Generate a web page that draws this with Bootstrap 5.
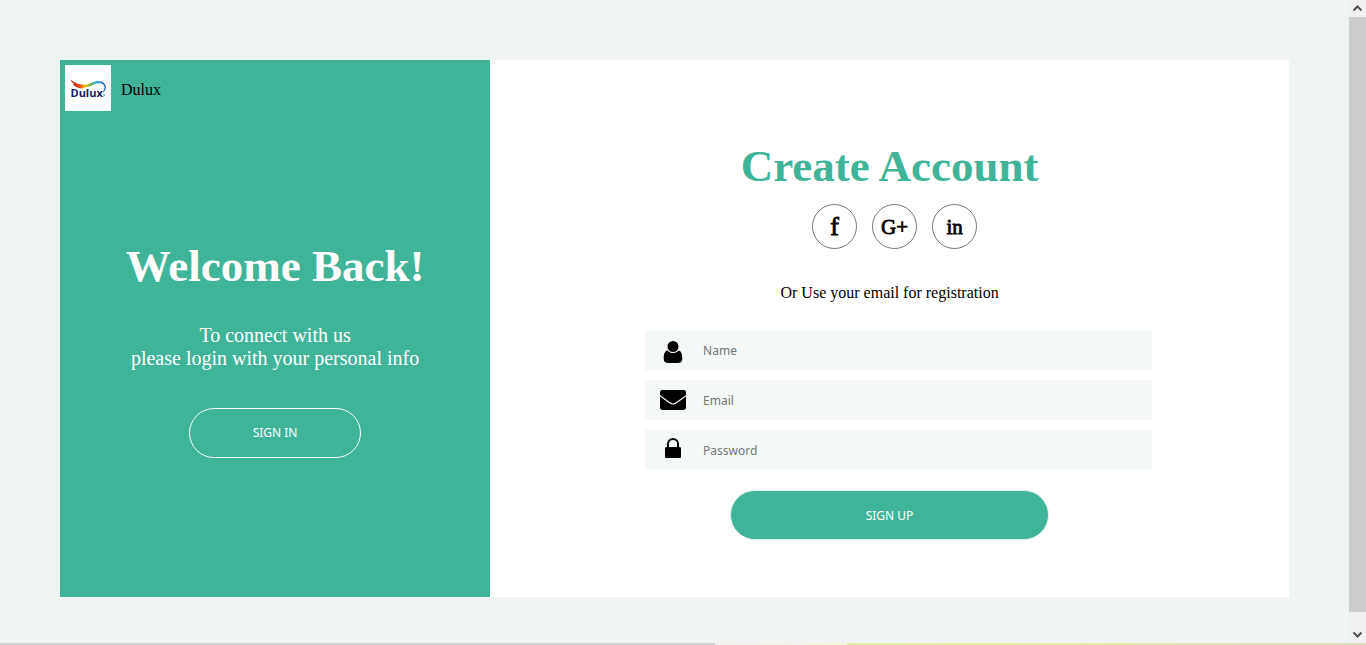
<!DOCTYPE html>
<html lang="en">
<head>
<meta charset="utf-8">
<meta name="viewport" content="width=device-width, initial-scale=1">
<title>Dulux - Create Account</title>
<link href="https://cdn.jsdelivr.net/npm/bootstrap@5.3.0/dist/css/bootstrap.min.css" rel="stylesheet">
<style>
  :root { --brand: #3fb498; --page: #f0f5f4; --field: #f4f9f8; }
  body { background: var(--page); color: #000; font-family: "Liberation Serif", "Times New Roman", serif; font-size: 16px; line-height: 18px; }
  .page-area { padding: 60px 60px 46px; }
  .welcome-pane { width: 35%; background: var(--brand); }
  .brand-link { padding: 5px; gap: 10px; }
  .brand-logo { width: 46px; height: 46px; }
  .big-title { font-size: 45px; line-height: 52px; font-weight: 700; }
  .welcome-body { padding-bottom: 16px; }
  .welcome-text { font-size: 20px; line-height: 23px; margin: 32px 0 38px; }
  .pill { width: 40%; height: 50px; border: 1px solid #fff; border-radius: 25px; background: var(--brand); color: #fff; font: 12px "Noto Sans", Tahoma, sans-serif; }
  .create-title { color: var(--brand); padding-top: 80px; }
  .social-row { gap: 15px; padding-left: 10px; margin-top: 12px; }
  .social-link { width: 45px; height: 45px; border: 1px solid #777; color: #000; font-size: 21px; font-weight: 400; -webkit-text-stroke: 0.8px #000; }
  .social-link.bolder { font-size: 26px; }
  .email-note { margin: 35px 0 28px; }
  .signup-form { gap: 10px; }
  .field-row { width: 507px; max-width: 90%; height: 40px; margin-left: 18px; background: var(--field); }
  .field-icon { width: 56px; height: 40px; }
  .field-row input { font: 12px "Noto Sans", Tahoma, sans-serif; padding: 0 2px; outline: 0; }
  .field-row input::placeholder { color: #757575; opacity: 1; }
  .signup-form .pill { margin-top: 10px; border-color: #e3f3ef; }
  .scroll-rail { width: 17px; background: #f0f0f0; }
  .scroll-rail svg { width: 17px; height: 17px; }
  .scroll-thumb { background: #cdcdcd; margin-bottom: 14px; }
  .bottom-strip { height: 2px; background: linear-gradient(90deg, #d0d3d1 0 715px, #f0f1ef 715px, #f2f6d8 847px, #e0eaa8 847px, #ecec9c 980px, #dcdcc0 100%); }
</style>
</head>
<body>
<div class="d-flex flex-column min-vh-100">
  <div class="d-flex flex-grow-1">
    <main class="page-area d-flex flex-grow-1">
      <section class="welcome-pane d-flex flex-column">
        <a href="#" class="brand-link d-flex align-items-center text-reset text-decoration-none">
          <svg class="brand-logo" viewBox="0 0 46 46" role="img" aria-label="Dulux logo">
            <defs>
              <linearGradient id="ribbon" x1="0" x2="1" y1="0" y2="0">
                <stop offset="0" stop-color="#c4161c"/><stop offset=".25" stop-color="#e8481c"/>
                <stop offset=".42" stop-color="#f8c51c"/><stop offset=".57" stop-color="#69b544"/>
                <stop offset=".72" stop-color="#35b4e5"/><stop offset="1" stop-color="#244a9b"/>
              </linearGradient>
            </defs>
            <rect width="46" height="46" fill="#fff"/>
            <path fill="url(#ribbon)" d="M6 15c3 2.500 6 3.500 9.500 4.300 4 .8 7.500.2 10.500-1.300 4.500-2.400 8.500-2.600 11.500-.9 2.800 1.600 4 4.300 3.100 6.900-.6 1.700-2 2.500-2.200 4-.6-1.600.2-3 .9-4.300.9-2-.2-4.200-2.800-5.100-3.500-1-6.500.2-9.500 1.800-3.500 1.800-6.500 1.200-9.500 3-3.500-.1-7-.7-9.500-4.200l1-.5C7.500 17.500 6 17 6 15z"/>
            <text x="5.500" y="32" font-family="Open Sans, sans-serif" font-size="11" font-weight="700" fill="#14205f">Dulux</text>
            <path d="M38.500 29.500l1 .2-.7 1.800" fill="none" stroke="#244a9b" stroke-width=".8"/>
          </svg>
          <span class="pt-1">Dulux</span>
        </a>
        <div class="welcome-body d-flex flex-column align-items-center justify-content-center flex-grow-1 text-white text-center">
          <h1 class="big-title m-0">Welcome Back!</h1>
          <p class="welcome-text">To connect with us<br>please login with your personal info</p>
          <button type="button" class="pill">SIGN IN</button>
        </div>
      </section>
      <section class="bg-white flex-grow-1 d-flex flex-column align-items-center">
        <h2 class="big-title create-title mb-0">Create Account</h2>
        <div class="social-row d-flex">
          <a href="#" aria-label="Facebook" class="social-link bolder rounded-circle d-flex align-items-center justify-content-center text-decoration-none">f</a>
          <a href="#" aria-label="Google Plus" class="social-link rounded-circle d-flex align-items-center justify-content-center text-decoration-none">G+</a>
          <a href="#" aria-label="LinkedIn" class="social-link rounded-circle d-flex align-items-center justify-content-center text-decoration-none">in</a>
        </div>
        <p class="email-note">Or Use your email for registration</p>
        <form class="signup-form w-100 d-flex flex-column align-items-center">
          <div class="field-row d-flex">
            <label for="name" class="field-icon" aria-label="Name">
              <svg width="56" height="40" viewBox="0 0 56 40"><path d="M22.500 20.500c-2.700.5-3.800 3.400-3.800 8 0 3 1.600 4.500 4.300 4.500h10c2.700 0 4.300-1.500 4.300-4.500 0-4.600-1.100-7.500-3.800-8-1.300 1.500-3.300 2.500-5.500 2.500s-4.200-1-5.500-2.500z"/><circle cx="28" cy="16.500" r="5.500" stroke="#f4f9f8" stroke-width="1.800" paint-order="stroke"/></svg>
            </label>
            <input id="name" type="text" class="border-0 bg-transparent flex-grow-1" placeholder="Name">
          </div>
          <div class="field-row d-flex">
            <label for="email" class="field-icon" aria-label="Email">
              <svg width="56" height="40" viewBox="0 0 56 40"><rect x="15" y="10" width="26" height="20" rx="2.400"/><path d="M14.500 15c1 1.300 2.300 2.200 3.600 3.100l5.900 4.100c1.300.9 2.600 1.800 4 1.800s2.700-.9 4-1.800l5.900-4.100c1.300-.9 2.600-1.800 3.600-3.100" fill="none" stroke="#f4f9f8" stroke-width="1.200"/></svg>
            </label>
            <input id="email" type="email" class="border-0 bg-transparent flex-grow-1" placeholder="Email">
          </div>
          <div class="field-row d-flex">
            <label for="password" class="field-icon" aria-label="Password">
              <svg width="56" height="40" viewBox="0 0 56 40"><path fill-rule="evenodd" d="M21.500 17h.5v-3a6 6 0 0 1 12 0v3h.5c1 0 1.500.6 1.500 1.500v8c0 1-.5 1.500-1.500 1.500h-13c-1 0-1.500-.5-1.500-1.500v-8c0-.9.500-1.500 1.500-1.500zm2.500 0h8v-3a4 4 0 0 0-8 0z"/></svg>
            </label>
            <input id="password" type="password" class="border-0 bg-transparent flex-grow-1" placeholder="Password">
          </div>
          <button type="submit" class="pill">SIGN UP</button>
        </form>
      </section>
    </main>
    <div class="scroll-rail d-flex flex-column flex-shrink-0" aria-hidden="true">
      <svg viewBox="0 0 17 17"><path d="M4.500 10.500l4-4 4 4" fill="none" stroke="#505050" stroke-width="2"/></svg>
      <div class="scroll-thumb flex-grow-1"></div>
      <svg viewBox="0 0 17 17"><path d="M4.500 6.500l4 4 4-4" fill="none" stroke="#505050" stroke-width="2"/></svg>
    </div>
  </div>
  <div class="bottom-strip"></div>
</div>
<script src="https://cdn.jsdelivr.net/npm/bootstrap@5.3.0/dist/js/bootstrap.bundle.min.js"></script>
</body>
</html>
